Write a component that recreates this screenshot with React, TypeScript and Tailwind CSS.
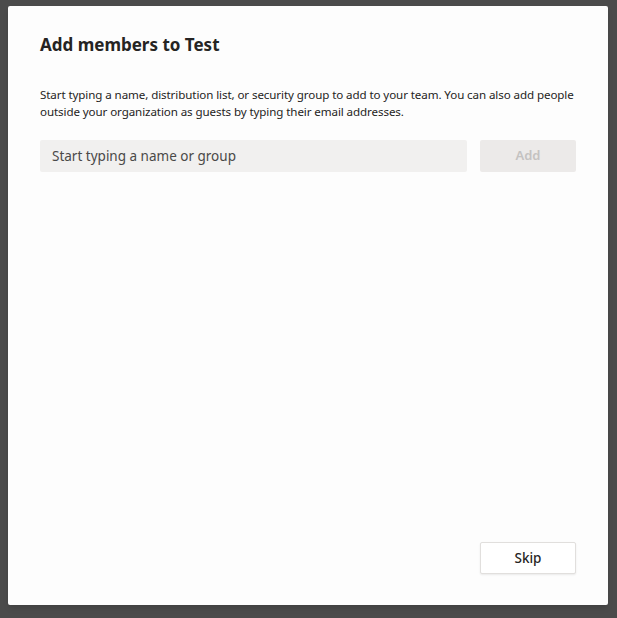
export default function App() {
  return (
    <div
      className="flex h-[618px] w-[617px] bg-[#4b4b4b] pb-[13px] pl-[8px] pr-[9px] pt-[6px]"
      style={{ fontFamily: '"Noto Sans", "Open Sans", sans-serif' }}
    >
      <div className="flex flex-1 flex-col rounded-[2px] bg-[#fdfdfd] px-[32px] pb-[31px] pt-[29px] shadow-md">
        <h1 className="text-[17px] font-bold leading-[20px] text-[#252423]">
          Add members to Test
        </h1>
        <p className="mt-[31px] text-[11.6px] leading-[17px] tracking-[-0.1px] text-[#252423]">
          Start typing a name, distribution list, or security group to add to your team. You can also add people
          outside your organization as guests by typing their email addresses.
        </p>
        <div className="mt-[20px] flex gap-[13px]">
          <input
            placeholder="Start typing a name or group"
            className="h-[32px] flex-1 rounded-[2px] bg-[#f1f0ef] px-[12px] text-[13.5px] text-[#252423] outline-none placeholder:text-[#4a4948]"
          />
          <button className="h-[32px] w-[96px] rounded-[2px] bg-[#eceae9] text-[13px] font-semibold text-[#c4c2c1]">
            Add
          </button>
        </div>
        <div className="flex-1" />
        <div className="flex justify-end">
          <button className="h-[32px] w-[96px] rounded-[2px] border border-[#e1dfdd] bg-white text-[13.5px] font-medium text-[#252423] shadow-[0_1px_2px_rgba(0,0,0,0.08)]">
            Skip
          </button>
        </div>
      </div>
    </div>
  );
}
